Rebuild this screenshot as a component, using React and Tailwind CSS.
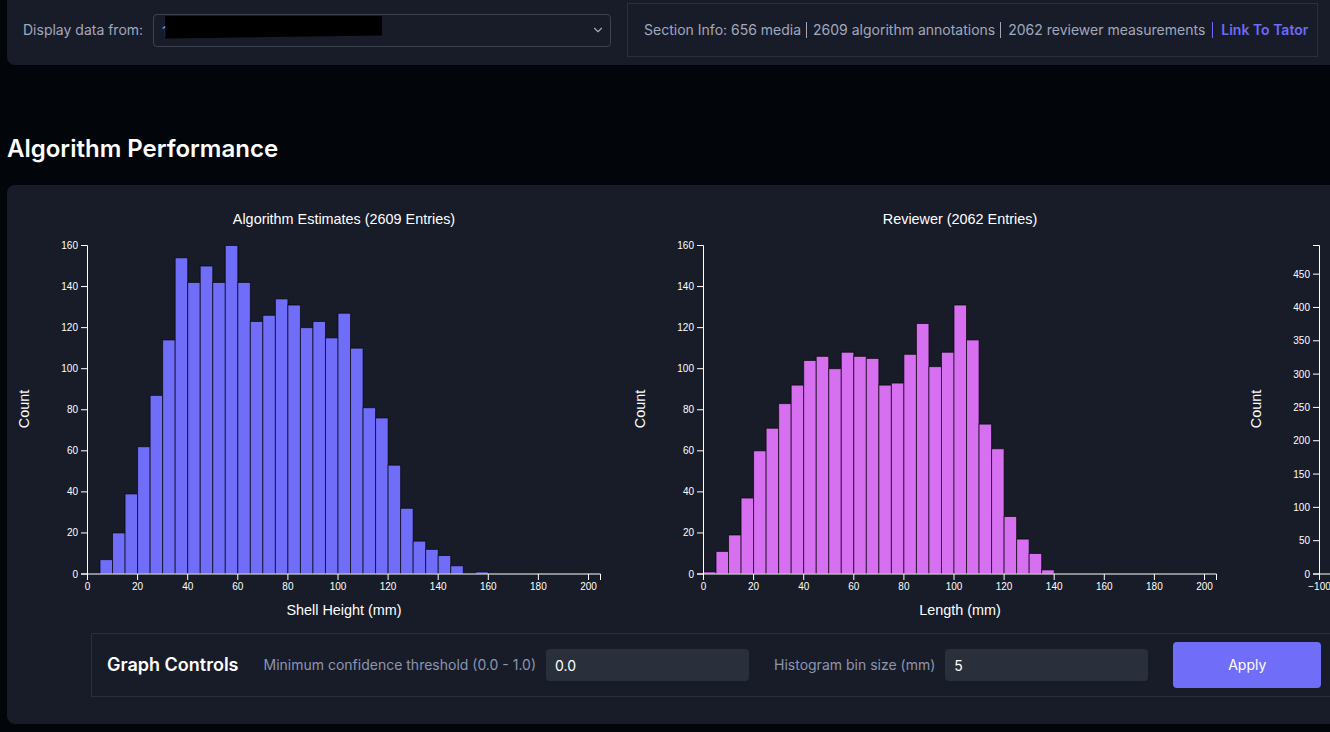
import React from 'react'
import { ChevronDown } from 'lucide-react'

const algorithmBins = [0, 7, 20, 39, 62, 87, 114, 154, 142, 150, 142, 160, 142, 123, 126, 134, 131, 120, 123, 115, 127, 110, 81, 76, 53, 32, 16, 12, 9, 4, 0, 1]
const reviewerBins = [1, 11, 19, 37, 60, 71, 83, 92, 104, 106, 100, 108, 106, 105, 92, 93, 107, 122, 101, 108, 131, 114, 73, 61, 28, 17, 10, 2]

const AXIS_X = 80
const AXIS_RIGHT = 593
const AXIS_TOP = 45.5
const AXIS_BOTTOM = 374
const X_SCALE = 2.505

const Histogram = ({ title, xLabel, bins, color, yMax, yTicks, xTicks, xMin = 0 }) => {
  const yScale = (AXIS_BOTTOM - AXIS_TOP) / yMax
  const xPos = (v) => AXIS_X + (v - xMin) * X_SCALE

  return (
    <svg width="616" height="425" className="shrink-0 font-['Liberation_Sans',Arial,sans-serif]" fill="white">
      <text x="337" y="24" fontSize="14.4" textAnchor="middle">{title}</text>
      <text transform={`translate(22,209) rotate(-90)`} fontSize="14.4" textAnchor="middle">Count</text>

      {bins.map((count, i) => (
        count > 0 && (
          <rect
            key={i}
            x={xPos(i * 5) + 0.5}
            y={AXIS_BOTTOM - count * yScale}
            width={5 * X_SCALE}
            height={count * yScale}
            fill={color}
            stroke="#000"
            strokeOpacity="0.65"
          />
        )
      ))}

      {/* y axis */}
      <path d={`M${AXIS_X - 6},${AXIS_TOP}H${AXIS_X + 0.5}V${AXIS_BOTTOM}H${AXIS_X - 6}`} fill="none" stroke="white" />
      {yTicks.map((v) => {
        const y = AXIS_BOTTOM - v * yScale
        return (
          <g key={v}>
            <line x1={AXIS_X - 6} x2={AXIS_X} y1={y} y2={y} stroke="white" />
            <text x={AXIS_X - 9} y={y + 3.5} fontSize="10" textAnchor="end">{v}</text>
          </g>
        )
      })}

      {/* x axis */}
      <path d={`M${AXIS_X + 0.5},${AXIS_BOTTOM + 6}V${AXIS_BOTTOM}H${AXIS_RIGHT + 0.5}V${AXIS_BOTTOM + 6}`} fill="none" stroke="white" />
      {xTicks.map((v) => (
        <g key={v}>
          <line x1={xPos(v) + 0.5} x2={xPos(v) + 0.5} y1={AXIS_BOTTOM} y2={AXIS_BOTTOM + 6} stroke="white" />
          <text x={xPos(v) + 0.5} y={AXIS_BOTTOM + 16} fontSize="10" textAnchor="middle">{v < 0 ? `−${-v}` : v}</text>
        </g>
      ))}
      <text x="337" y="415" fontSize="14.4" textAnchor="middle">{xLabel}</text>
    </svg>
  )
}

const countTicks = [0, 20, 40, 60, 80, 100, 120, 140, 160]
const mmTicks = [0, 20, 40, 60, 80, 100, 120, 140, 160, 180, 200]

export default function App() {
  return (
    <div className="w-[1330px] h-[732px] overflow-hidden bg-[#020509] pl-[7px] font-[Inter,sans-serif]">
      {/* Section selector */}
      <div className="w-[1340px] h-[65px] flex items-start pt-[3px] bg-[#181c28] rounded-bl-lg">
        <div className="flex items-center h-[54px]">
          <span className="ml-4 text-sm text-[#a0a8bf]">Display data from:</span>
          <div className="relative ml-[10px] w-[458px] h-[33px] flex items-center justify-end pr-[5px] border border-[#3d4152] rounded">
            <span className="absolute left-[8px] top-[7px] text-sm text-[#a0a8bf]">1</span>
            <ChevronDown size={14} className="text-[#a0a8bf]" />
            <div className="absolute left-[11px] top-px w-[217px] h-[23px] bg-black [clip-path:polygon(0_0,100%_0,100%_87%,0_100%)]"></div>
          </div>
        </div>
        <div className="ml-4 w-[691px] h-[54px] flex items-center pl-4 border border-[#2a2f3b] text-sm text-[#a0a8bf]">
          <span>Section Info: 656 media</span>
          <span className="ml-[5px] mr-[6px] h-4 border-l border-[#a0a8bf]"></span>
          <span>2609 algorithm annotations</span>
          <span className="ml-[5px] mr-[7px] h-4 border-l border-[#a0a8bf]"></span>
          <span>2062 reviewer measurements</span>
          <span className="ml-[7px] h-4 border-l border-[#6d6bf8]"></span>
          <span className="ml-2 font-semibold text-[#6d6bf8]">Link To Tator</span>
        </div>
      </div>

      <h2 className="mt-[57px] mb-[9px] h-[54px] flex items-center text-2xl font-semibold text-white">Algorithm Performance</h2>

      {/* Charts card */}
      <div className="w-[1340px] h-[539px] pt-[15px] bg-[#181c28] rounded-l-lg">
        <div className="flex">
          <Histogram title="Algorithm Estimates (2609 Entries)" xLabel="Shell Height (mm)" bins={algorithmBins} color="#706ef8" yMax={160} yTicks={countTicks} xTicks={mmTicks} />
          <Histogram title="Reviewer (2062 Entries)" xLabel="Length (mm)" bins={reviewerBins} color="#d670f1" yMax={160} yTicks={countTicks} xTicks={mmTicks} />
          <Histogram title="" xLabel="" bins={[]} color="#706ef8" yMax={493} yTicks={[0, 50, 100, 150, 200, 250, 300, 350, 400, 450]} xTicks={[-100]} xMin={-100} />
        </div>

        <div className="ml-[84px] mt-2 w-[1260px] h-16 flex items-center pl-[15px] border border-[#2a2f3b]">
          <span className="text-lg font-semibold text-white">Graph Controls</span>
          <span className="ml-[25px] text-sm text-[#8d95b0]">Minimum confidence threshold (0.0 - 1.0)</span>
          <input readOnly value="0.0" className="ml-[10px] w-[203px] h-8 px-[9px] rounded-sm bg-[#2a2f3c] text-sm text-white outline-none" />
          <span className="ml-[25px] text-sm text-[#8d95b0]">Histogram bin size (mm)</span>
          <input readOnly value="5" className="ml-[10px] w-[203px] h-8 px-[9px] rounded-sm bg-[#2a2f3c] text-sm text-white outline-none" />
          <button className="ml-[25px] w-[148px] h-[46px] rounded bg-[#706ef8] text-sm text-white">Apply</button>
        </div>
      </div>
    </div>
  )
}
